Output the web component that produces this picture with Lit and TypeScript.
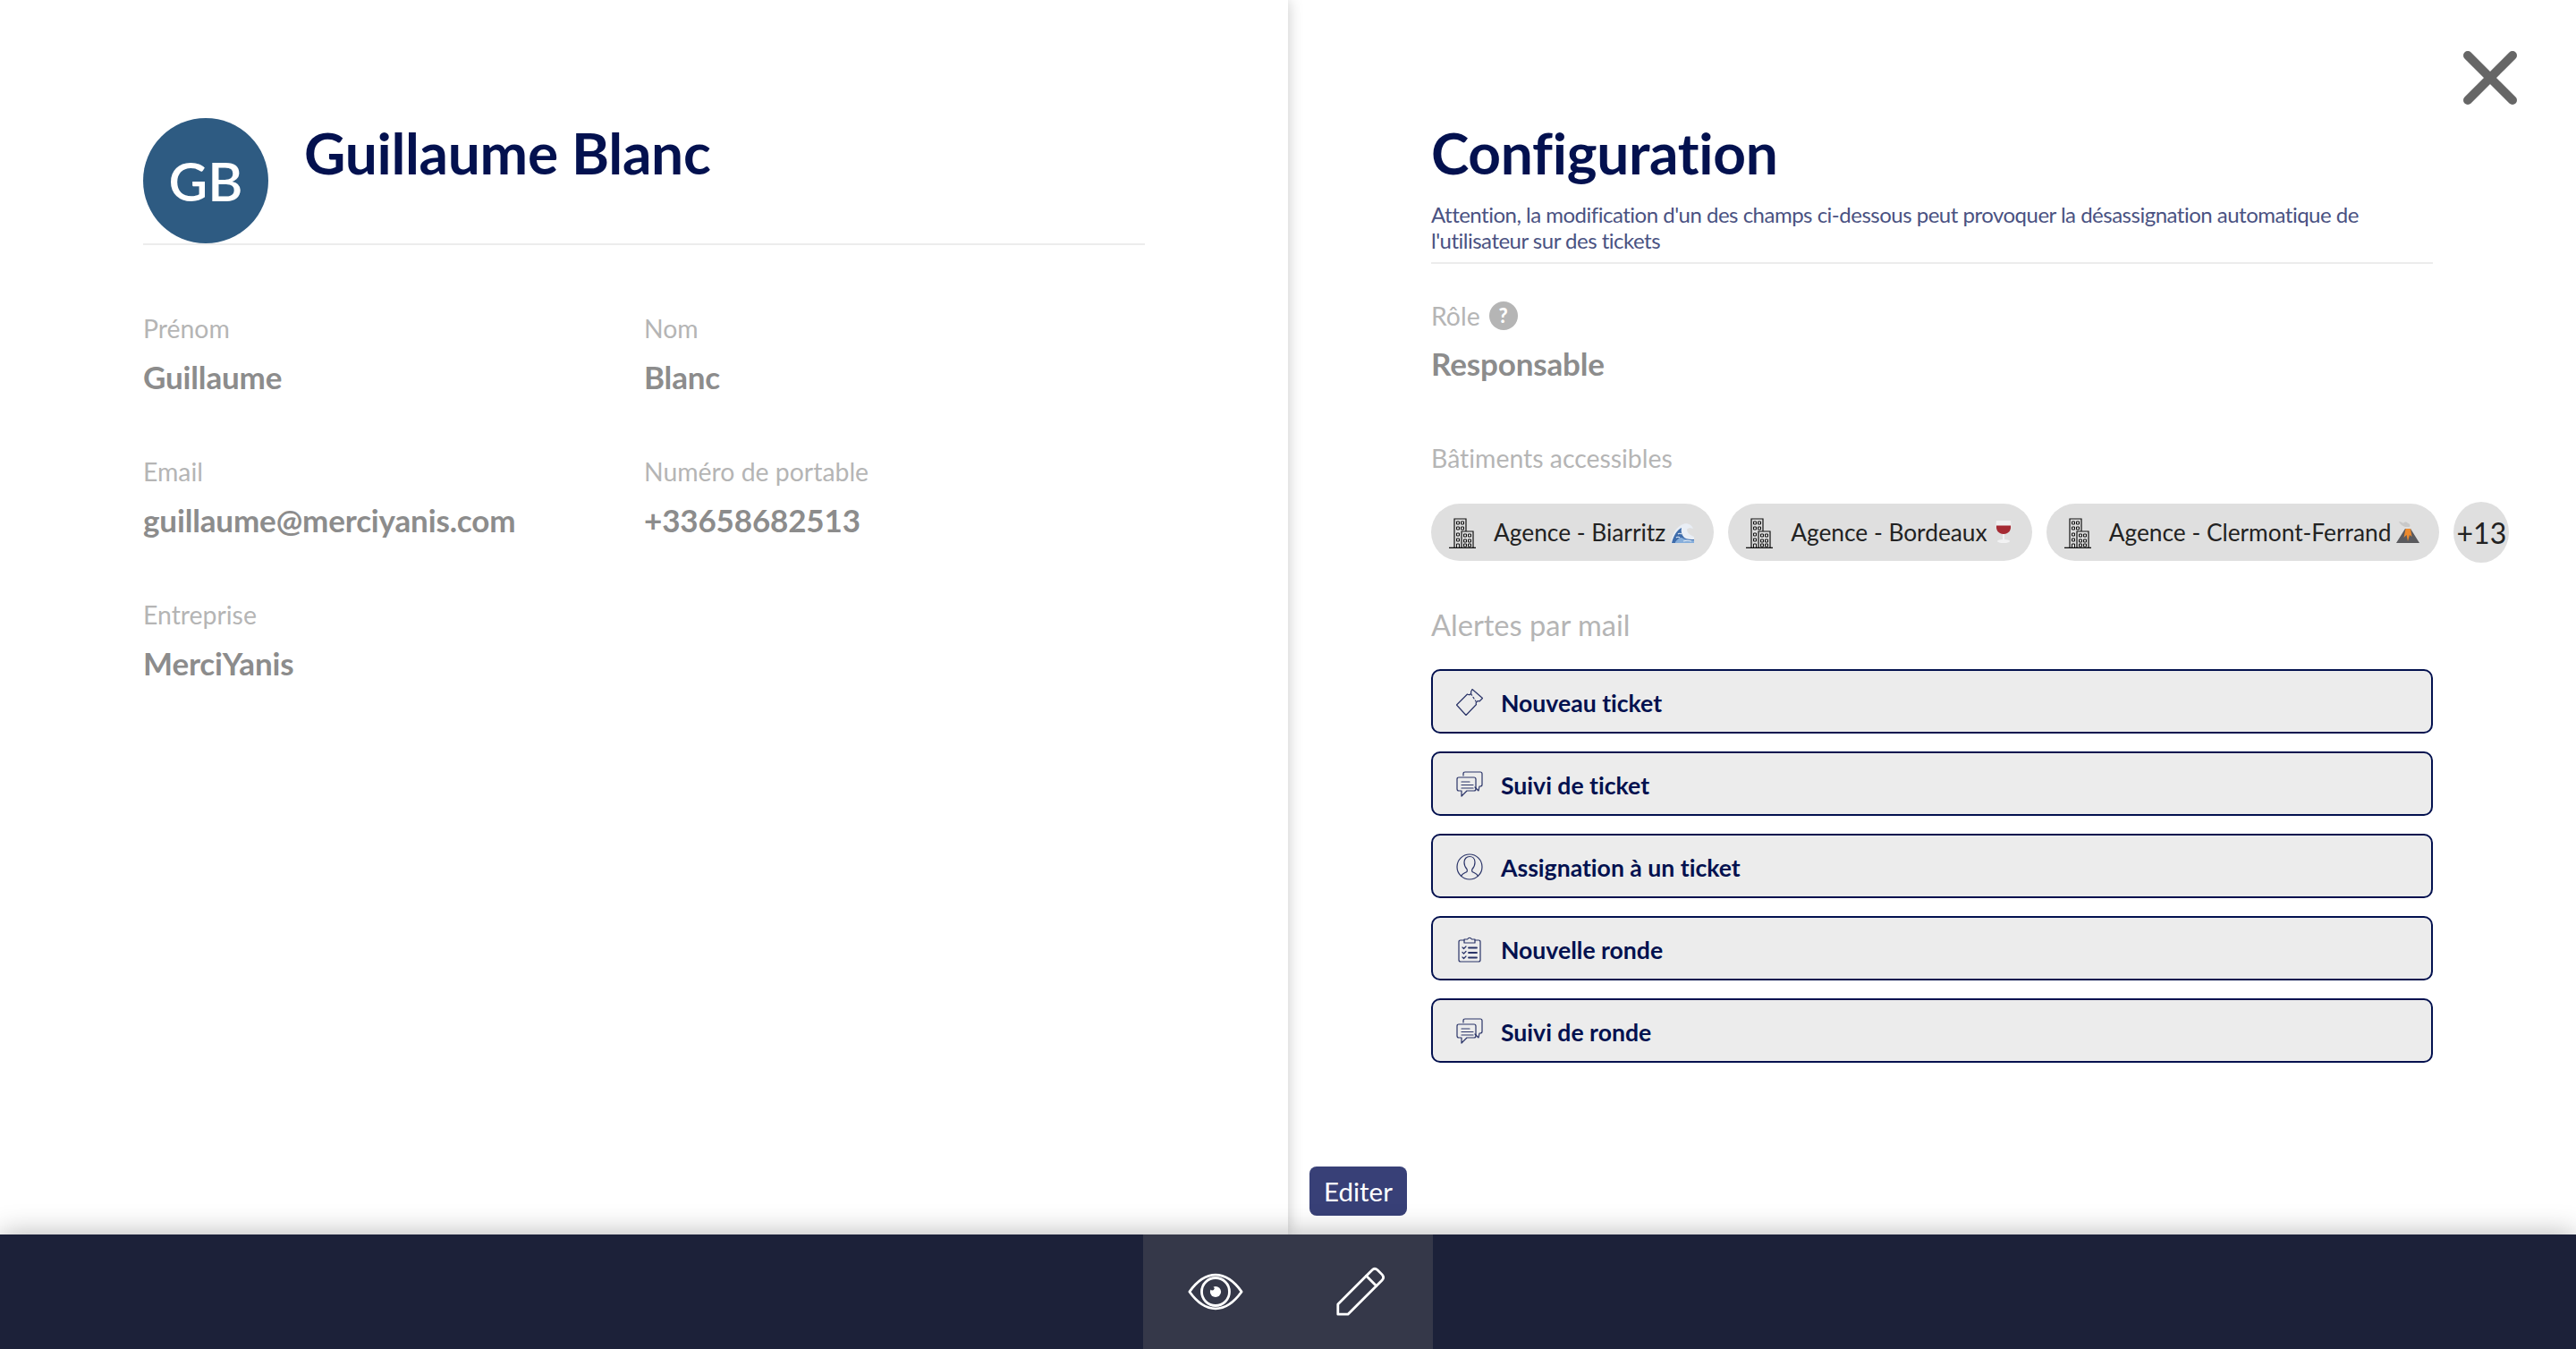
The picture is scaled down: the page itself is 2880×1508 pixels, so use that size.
import { LitElement, html, css, svg } from "lit";
import { customElement } from "lit/decorators.js";

const building = html`<svg class="bld" viewBox="0 0 30 34" fill="none" stroke="#111" stroke-width="1.2">
  <path d="M0 33.4H30" stroke-width="1.4"/><path d="M6 33V1h13v14"/><path d="M14 33V15h13v18"/>
  <path d="M8.500 4h3v3h-3zM13.500 4h3v3h-3zM8.500 10h3v3h-3zM13.500 10h3v3h-3zM8.500 17h3v3h-3zM8.500 23h3v3h-3zM8.500 33v-4h3v4M16.500 18h3v3h-3zM21.500 18h3v3h-3zM16.500 24h3v3h-3zM21.500 24h3v3h-3zM16.500 29h3v3h-3zM21.500 29h3v3h-3z" stroke-width="1"/>
</svg>`;

const wave = html`<svg class="emo wave" viewBox="0 0 26 22">
  <path d="M0 22C1 13 6 3 15 .5 19-.5 24 2 25 6c-3-1.500-6-1-7 1 0 3 3 6 8 8v7z" fill="#e9eef5"/>
  <path d="M1 22C3 14 7 7 12 5c-1 4 0 8 3 11 3 2 7 2 11 2v4z" fill="#3e6cab"/>
  <path d="M5 21c2-3 4-5 7-5 3 2 8 3 14 3v3H5z" fill="#86aedb"/>
  <path d="M8 12c1-1 3-1 4 0M6 16c1-1 3-1 4 0M14 20c3-1 6-1 9 0" stroke="#dfe8f3" stroke-width="1.200" fill="none"/>
</svg>`;

const wine = html`<svg class="emo wine" viewBox="0 0 20 26">
  <path d="M2 1h16c1 6 1 14-8 15C1 15 1 7 2 1z" fill="#efeff0"/>
  <path d="M2 6.500h16c.5 5-1.500 9-8 9.500C3.500 15.500 1.500 11.500 2 6.500z" fill="#a52a33"/>
  <path d="M9 16h2v7H9z" fill="#f2f2f3"/><ellipse cx="10" cy="24" rx="7" ry="2" fill="#f2f2f3"/>
</svg>`;

const volcano = html`<svg class="emo volc" viewBox="0 0 26 25">
  <path d="M0 25 10 9h6l10 16z" fill="#5a5a5e"/>
  <path d="M10.500 9h5.500l1.500 9-2.500-2-2 7-1.500-7-3 3z" fill="#ec8a2e"/>
  <path d="M10 7C7 6 4 4 3 1c2 0 4 1 5 2 1-2 4-2 5 0 2 0 3 2 2 4z" fill="#c8c8c8"/>
</svg>`;

const ticketIcon = svg`<path d="M0.500 18 12.500 6c1.500 1 2.500 1 3.500 0s1-1.500 .5-2.500L18 .5 29.500 10.500 26 14c-1-.5-2-.5-3 .5s-1 2-.5 3L11 29.500z"/><path d="M16.500 5.500l5.500 8.500" stroke-dasharray="2 2.500"/>`;
const chatIcon = svg`<path d="M8 5V3q0-2 2-2h17q2 0 2 2v12q0 2-2 2h-1l-1 5-4-4"/><path d="M3 7h17q2 0 2 2v11q0 2-2 2H12l-6 6v-6H3q-2 0-2-2V9q0-2 2-2z"/><path d="M6 12h9M6 15.500h13M6 19h13"/>`;
const userIcon = svg`<circle cx="15" cy="15" r="14"/><path d="M5.500 25.500c1-3 4-3.500 6.500-5 .5-1 .5-2 0-3-2-2-3-4.500-3-7.500 0-4 2.500-6.500 6-6.500s6 2.500 6 6.500c0 3-1 5.500-3 7.500-.5 1-.5 2 0 3 2.500 1.500 5.500 2 6.500 5"/>`;
const listIcon = svg`<path d="M9 5H5q-2 0-2 2v20q0 2 2 2h20q2 0 2-2V7q0-2-2-2h-4"/><path d="M9 8V4h3.500q2.500-3.500 5 0H21v4z"/><path d="M7 13l1.500 1.500L11 12M7 18.500 8.500 20l2.500-2.500M7 24l1.500 1.500L11 23" /><path d="M14 13.500h9M14 19h9M14 24.500h9" stroke-width="1.800"/>`;

const ALERTS = [
  { label: "Nouveau ticket", icon: ticketIcon },
  { label: "Suivi de ticket", icon: chatIcon },
  { label: "Assignation à un ticket", icon: userIcon },
  { label: "Nouvelle ronde", icon: listIcon },
  { label: "Suivi de ronde", icon: chatIcon },
];

const FIELDS = [
  ["Prénom", "Guillaume"],
  ["Nom", "Blanc"],
  ["Email", "guillaume@merciyanis.com"],
  ["Numéro de portable", "+33658682513"],
  ["Entreprise", "MerciYanis"],
];

@customElement("app-root")
export class AppRoot extends LitElement {
  static styles = css`
    :host { display: flex; flex-direction: column; height: 100vh; font-family: Lato, "Liberation Sans", sans-serif; font-variant-ligatures: none; background: #fff; overflow: hidden; }
    .main { flex: 1; display: flex; min-height: 0; position: relative; }
    .left { width: 1440px; box-sizing: border-box; padding: 132px 160px 0; position: relative; z-index: 1; background: #fff; box-shadow: 0 0 16px rgba(0,0,0,.22); clip-path: inset(0 -40px 0 0); }
    .right { flex: 1; box-sizing: border-box; padding: 131px 160px 0; position: relative; min-width: 0; }
    .head { display: flex; align-items: flex-start; gap: 40px; border-bottom: 2px solid #ececec; height: 142px; box-sizing: border-box; }
    .avatar { width: 140px; height: 140px; border-radius: 50%; background: #2e5b82; color: #fff; font-size: 60px; font-weight: 600; display: flex; align-items: center; justify-content: center; flex: none; }
    h1 { margin: 0; font-size: 64px; line-height: 80px; font-weight: 700; color: #03114f; letter-spacing: -.3px; }
    .name { margin-top: -1px; }
    .grid { display: grid; grid-template-columns: 560px 560px; grid-auto-rows: 160px; margin-top: 75px; }
    .label { font-size: 28.4px; line-height: 36px; color: #b5b5b5; }
    .value { font-size: 35px; line-height: 44px; font-weight: 700; color: #8c8c8c; margin-top: 14px; letter-spacing: -.15px; }
    .desc { margin: 14px 0 0; font-size: 24px; line-height: 29px; color: #4a5282; letter-spacing: -.5px; }
    .rule { height: 2px; background: #ececec; margin-top: 10px; }
    .role { display: flex; align-items: center; gap: 10px; margin-top: 40px; height: 36px; }
    .q { width: 32px; height: 32px; border-radius: 50%; background: #b5b5b5; color: #fff; font-size: 22px; font-weight: 900; display: flex; align-items: center; justify-content: center; }
    .value.r { margin-top: 13px; }
    .label.b { margin-top: 66px; }
    .chips { display: flex; gap: 16px; margin-top: 31px; align-items: center; width: 1300px; }
    .chip { height: 64px; border-radius: 32px; background: #dfdfdf; display: flex; align-items: center; box-sizing: border-box; padding: 0 22px 0 20px; font-size: 26.3px; color: #222; flex: none; white-space: nowrap; }
    .bld { width: 30px; height: 34px; margin-right: 20px; margin-top: 2px; flex: none; }
    .emo { margin-left: 5px; flex: none; margin-top: 6px; }
    .wave { width: 26px; height: 22px; margin-top: 22px; margin-left: 6px; align-self: flex-start; }
    .wine { width: 20px; height: 26px; margin-top: 18px; margin-left: 8px; align-self: flex-start; }
    .volc { width: 26px; height: 25px; margin-top: 19px; margin-left: 6px; align-self: flex-start; }
    .more { width: 62px; height: 68px; border-radius: 50%; background: #dfdfdf; font-size: 32px; color: #222; display: flex; align-items: center; justify-content: center; flex: none; white-space: nowrap; }
    .label.a { font-size: 32.6px; line-height: 40px; margin-top: 50px; }
    .alerts { display: flex; flex-direction: column; gap: 20px; margin-top: 29px; }
    .alert { height: 72px; box-sizing: border-box; border: 2px solid #03114f; border-radius: 10px; background: #ececec; display: flex; align-items: center; padding: 3px 0 0 26px; gap: 20px; color: #03114f; font-size: 26.6px; font-weight: 700; }
    .alert svg { width: 30px; height: 30px; flex: none; fill: none; stroke: #2a3468; stroke-width: 1.2; stroke-linejoin: round; stroke-linecap: round; margin-top: -2px; }
    .close { position: absolute; left: 1314px; top: 57px; width: 60px; height: 60px; }
    .edit { position: absolute; left: 24px; top: 1304px; height: 55px; width: 109px; border-radius: 8px; background: #384077; color: #fff; font-size: 29.5px; display: flex; align-items: center; justify-content: center; }
    .footer { height: 128px; flex: none; background: #1c2139; display: flex; justify-content: center; position: relative; z-index: 2; box-shadow: 0 0 30px rgba(0,0,0,.3); }
    .tools { width: 324px; background: #353849; display: flex; }
    .tool { flex: 1; display: flex; align-items: center; justify-content: center; }
    .tool svg { fill: none; stroke: #fff; stroke-width: 3; stroke-linejoin: round; stroke-linecap: round; }
  `;

  render() {
    return html`
      <div class="main">
        <section class="left">
          <div class="head">
            <div class="avatar">GB</div>
            <h1 class="name">Guillaume Blanc</h1>
          </div>
          <div class="grid">
            ${FIELDS.map(([l, v]) => html`<div><div class="label">${l}</div><div class="value">${v}</div></div>`)}
          </div>
        </section>
        <section class="right">
          <h1>Configuration</h1>
          <p class="desc">Attention, la modification d'un des champs ci-dessous peut provoquer la désassignation automatique de<br />l'utilisateur sur des tickets</p>
          <div class="rule"></div>
          <div class="role label"><span>Rôle</span><span class="q">?</span></div>
          <div class="value r">Responsable</div>
          <div class="label b">Bâtiments accessibles</div>
          <div class="chips">
            <div class="chip">${building}<span>Agence - Biarritz</span>${wave}</div>
            <div class="chip">${building}<span>Agence - Bordeaux</span>${wine}</div>
            <div class="chip">${building}<span>Agence - Clermont-Ferrand</span>${volcano}</div>
            <div class="more">+13</div>
          </div>
          <div class="label a">Alertes par mail</div>
          <div class="alerts">
            ${ALERTS.map((a) => html`<div class="alert"><svg viewBox="0 0 30 30">${a.icon}</svg><span>${a.label}</span></div>`)}
          </div>
          <svg class="close" viewBox="0 0 60 60"><path d="M5 5 55 55M55 5 5 55" stroke="#666" stroke-width="10" stroke-linecap="round"/></svg>
          <div class="edit">Editer</div>
        </section>
      </div>
      <footer class="footer">
        <div class="tools">
          <div class="tool"><svg width="62" height="42" viewBox="0 0 66 44"><path d="M2 22C12 8 22 2 33 2s21 6 31 20c-10 14-20 20-31 20S12 36 2 22z"/><circle cx="33" cy="22" r="16.500"/><circle cx="33" cy="22" r="6.500" fill="#fff" stroke="none"/><circle cx="29" cy="18" r="2.500" fill="#353849" stroke="none"/></svg></div>
          <div class="tool"><svg width="56" height="56" viewBox="0 0 60 60"><path d="M3 57V45L44 4q3-3 6.500 0L56 9.500q3 3.500 0 6.500L15 57z"/><path d="M37 11l12 12"/></svg></div>
        </div>
      </footer>
    `;
  }
}
